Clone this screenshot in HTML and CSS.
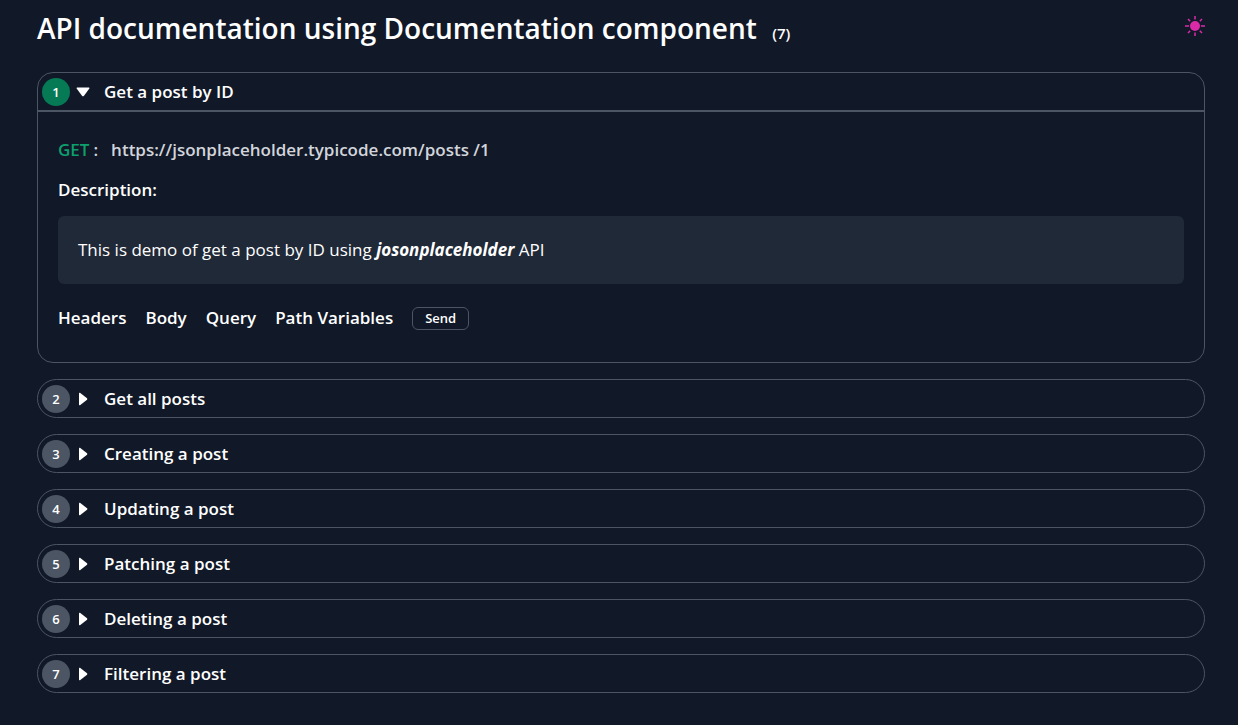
FILE: index.html
```html
<!DOCTYPE html>
<html lang="en">
<head>
<meta charset="utf-8">
<meta name="viewport" content="width=device-width, initial-scale=1">
<title>API documentation</title>
<link rel="stylesheet" href="styles.css">
</head>
<body>
<main class="page">
  <header class="page-header">
    <h1 class="title">API documentation using Documentation component <span class="count">(7)</span></h1>
    <button class="theme-toggle" type="button" aria-label="Toggle theme">
      <svg width="20" height="20" viewBox="0 0 20 20"><circle cx="10" cy="10" r="5" fill="currentColor"/><path d="M10 0v3.500M10 16.500v3.500M0 10h4M16 10h4M3 3l2.200 2.200M14.800 14.800l2.200 2.200M17 3l-2.200 2.200M5.200 14.800l-2.200 2.200" stroke="currentColor" stroke-width="1.500" fill="none"/></svg>
    </button>
  </header>
  <div class="list">
    <section class="card card-open">
      <button class="card-head" type="button" aria-expanded="true"><span class="badge">1</span><svg class="caret" width="14" height="14" viewBox="0 0 14 14"><path d="M1 2.500h12q.8.300.200 1.200L8 10.800q-1 1-2 0L.8 3.700Q.200 2.800 1 2.500z" fill="currentColor"/></svg><span class="card-title">Get a post by ID</span></button>
      <div class="card-body">
        <p class="request"><span class="method">GET</span><span class="colon">:</span><span class="url">https://jsonplaceholder.typicode.com/posts /1</span></p>
        <h2 class="label">Description:</h2>
        <p class="description">This is demo of get a post by ID using <strong><em>josonplaceholder</em></strong> API</p>
        <div class="actions">
          <button class="tab" type="button">Headers</button>
          <button class="tab" type="button">Body</button>
          <button class="tab" type="button">Query</button>
          <button class="tab" type="button">Path Variables</button>
          <button class="send" type="button">Send</button>
        </div>
      </div>
    </section>
    <section class="card"><button class="card-head" type="button" aria-expanded="false"><span class="badge">2</span><svg class="caret" width="14" height="14" viewBox="0 0 14 14"><path d="M3 1.500q0-1 1-.7l7 5.500q.8.700 0 1.400L4 13.200q-1 .3-1-.7z" fill="currentColor"/></svg><span class="card-title">Get all posts</span></button></section>
    <section class="card"><button class="card-head" type="button" aria-expanded="false"><span class="badge">3</span><svg class="caret" width="14" height="14" viewBox="0 0 14 14"><path d="M3 1.500q0-1 1-.7l7 5.500q.8.700 0 1.400L4 13.200q-1 .3-1-.7z" fill="currentColor"/></svg><span class="card-title">Creating a post</span></button></section>
    <section class="card"><button class="card-head" type="button" aria-expanded="false"><span class="badge">4</span><svg class="caret" width="14" height="14" viewBox="0 0 14 14"><path d="M3 1.500q0-1 1-.7l7 5.500q.8.700 0 1.400L4 13.200q-1 .3-1-.7z" fill="currentColor"/></svg><span class="card-title">Updating a post</span></button></section>
    <section class="card"><button class="card-head" type="button" aria-expanded="false"><span class="badge">5</span><svg class="caret" width="14" height="14" viewBox="0 0 14 14"><path d="M3 1.500q0-1 1-.7l7 5.500q.8.700 0 1.400L4 13.200q-1 .3-1-.7z" fill="currentColor"/></svg><span class="card-title">Patching a post</span></button></section>
    <section class="card"><button class="card-head" type="button" aria-expanded="false"><span class="badge">6</span><svg class="caret" width="14" height="14" viewBox="0 0 14 14"><path d="M3 1.500q0-1 1-.7l7 5.500q.8.700 0 1.400L4 13.200q-1 .3-1-.7z" fill="currentColor"/></svg><span class="card-title">Deleting a post</span></button></section>
    <section class="card"><button class="card-head" type="button" aria-expanded="false"><span class="badge">7</span><svg class="caret" width="14" height="14" viewBox="0 0 14 14"><path d="M3 1.500q0-1 1-.7l7 5.500q.8.700 0 1.400L4 13.200q-1 .3-1-.7z" fill="currentColor"/></svg><span class="card-title">Filtering a post</span></button></section>
  </div>
</main>
</body>
</html>
```
FILE: styles.css
```css
* {
  box-sizing: border-box;
}

body {
  margin: 0;
  background: #111827;
  color: #fff;
  font-family: "Segoe UI", "Open Sans", "Noto Sans", sans-serif;
  font-size: 17px;
  line-height: 28px;
}

h1,
h2,
p {
  margin: 0;
}

button {
  padding: 0;
  border: 0;
  background: none;
  color: inherit;
  font: inherit;
  cursor: pointer;
}

svg {
  display: block;
}

.page {
  padding: 8px 33px 32px 37px;
}

.page-header {
  display: flex;
  justify-content: space-between;
  align-items: flex-start;
  padding-bottom: 24px;
}

.title {
  font-size: 28px;
  font-weight: 600;
  line-height: 40px;
}

.count {
  margin-left: 8px;
  font-size: 15px;
  line-height: 20px;
}

.theme-toggle {
  padding-top: 8px;
  color: #db2aa8;
}

.list {
  display: flex;
  flex-direction: column;
  gap: 16px;
}

.card {
  border: 1px solid #4b5563;
  border-radius: 20px;
}

.card-open {
  border-radius: 16px;
}

.card-head {
  display: flex;
  align-items: center;
  width: 100%;
  min-height: 37px;
  padding: 0 4px;
  font-weight: 600;
  text-align: left;
}

.card-open .card-head {
  border-bottom: 2px solid #4b5563;
  min-height: 39px;
}

.badge {
  width: 28px;
  height: 28px;
  border-radius: 50%;
  background: #4b5563;
  font-size: 13px;
  text-align: center;
}

.card-open .badge {
  background: #057a55;
}

.caret {
  margin-left: 6px;
}

.card-title {
  margin-left: 14px;
}

.card-body {
  display: flex;
  flex-direction: column;
  gap: 12px;
  padding: 24px 20px 30px;
}

.request {
  display: flex;
  font-weight: 600;
  color: #d1d5db;
}

.method {
  color: #0e9f6e;
}

.colon {
  margin: 0 13px 0 4px;
}

.label {
  font-size: 17px;
  font-weight: 600;
}

.description {
  padding: 20px;
  border-radius: 6px;
  background: #1f2937;
}

.actions {
  display: flex;
  align-items: center;
  gap: 19px;
  padding-top: 8px;
}

.tab {
  font-weight: 600;
}

.send {
  padding: 0 12px;
  border: 1px solid #4b5563;
  border-radius: 6px;
  font-size: 13px;
  font-weight: 600;
  line-height: 21px;
}
```
